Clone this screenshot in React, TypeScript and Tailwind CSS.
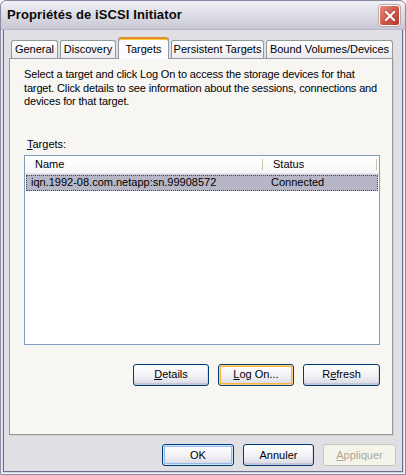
import React from "react";

const font = "font-['Tahoma','Liberation_Sans','Arial',sans-serif]";

const XpButton = ({
  children,
  variant = "normal",
  className = "",
}: {
  children: React.ReactNode;
  variant?: "normal" | "hot" | "default" | "disabled";
  className?: string;
}) => {
  if (variant === "disabled") {
    return (
      <div
        className={`flex items-center justify-center h-[22px] rounded-[3px] border border-[#c9c7ba] bg-[#f5f4ea] text-[#aca899] ${className}`}
      >
        {children}
      </div>
    );
  }
  const inner =
    variant === "hot"
      ? "shadow-[inset_0_0_0_1px_#ffd68b,inset_0_0_0_2px_#f5b43a]"
      : variant === "default"
      ? "shadow-[inset_0_0_0_1px_#cee7ff,inset_0_0_0_2px_#98b8ea]"
      : "shadow-[inset_0_-2px_0_0_#c6c5d7,inset_-1px_0_0_0_#dcdbe6]";
  return (
    <div
      className={`flex items-center justify-center h-[22px] rounded-[3px] border border-[#003c74] bg-gradient-to-b from-white via-[#f3f3f7] to-[#d8d8e3] text-black ${inner} ${className}`}
    >
      {children}
    </div>
  );
};

const Tab = ({
  label,
  active = false,
  width,
}: {
  label: string;
  active?: boolean;
  width: string;
}) => {
  if (active) {
    return (
      <div
        className={`relative z-10 h-[22px] -mb-px ${width} border-x border-[#919b9c] bg-[#fcfcfe] rounded-t-[3px] flex items-center justify-center pt-[2px] shadow-[inset_0_2px_0_0_#e68b2c,inset_0_3px_0_0_#ffc73c]`}
      >
        {label}
      </div>
    );
  }
  return (
    <div
      className={`h-[18px] ${width} border border-b-0 border-[#919b9c] rounded-t-[3px] bg-gradient-to-b from-white to-[#ebebf0] flex items-center justify-center`}
    >
      {label}
    </div>
  );
};

export default function App() {
  return (
    <div className={`w-[406px] h-[475px] ${font} text-[11px] text-black`}>
      <div className="w-full h-full flex flex-col rounded-t-[6px] border border-[#8b8aa3] bg-[#e0dfe3] shadow-[inset_0_0_0_1px_#f4f4f8,inset_0_0_0_2px_#d7d6df,inset_0_0_0_3px_#6f6e8a]">
        {/* Title bar */}
        <div className="h-[29px] shrink-0 flex items-center justify-between pl-[6px] pr-[5px] rounded-t-[6px] bg-gradient-to-b from-[#f1f1f5] via-[#dcdce5] to-[#c9c9d6] border-b border-[#b9b8c9]">
          <span className="font-['Liberation_Sans','Arial',sans-serif] font-bold text-[13px] text-[#0a0a0a] tracking-[0.1px]">
            Propriétés de iSCSI Initiator
          </span>
          <div className="w-[21px] h-[21px] rounded-[3px] border border-white bg-gradient-to-br from-[#e38a7b] via-[#cf5a4a] to-[#b23a2c] shadow-[0_0_0_1px_#c3a6a6] flex items-center justify-center mt-[1px]">
            <svg width="12" height="12" viewBox="0 0 12 12">
              <path
                d="M2 2 L10 10 M10 2 L2 10"
                stroke="#7a1c14"
                strokeWidth="3.6"
                strokeLinecap="square"
                opacity="0.35"
              />
              <path
                d="M2 2 L10 10 M10 2 L2 10"
                stroke="white"
                strokeWidth="2.2"
                strokeLinecap="square"
              />
            </svg>
          </div>
        </div>

        {/* Body */}
        <div className="flex-1 flex flex-col pl-[8px] pr-[12px] pt-[6px]">
          {/* Tabs */}
          <div className="flex items-end gap-[2px] pl-[2px] h-[22px]">
            <Tab label="General" width="w-[47px]" />
            <Tab label="Discovery" width="w-[56px]" />
            <Tab label="Targets" width="w-[51px]" active />
            <Tab label="Persistent Targets" width="w-[93px]" />
            <Tab label="Bound Volumes/Devices" width="w-[127px]" />
          </div>

          {/* Panel */}
          <div className="h-[377px] border border-[#919b9c] bg-[#f7f6f3] shadow-[1px_1px_0_0_#d0cfca] pl-[14px] pr-[12px] pt-[9px] flex flex-col">
            <p className="leading-[13.5px] whitespace-nowrap tracking-[-0.15px]">
              Select a target and click Log On to access the storage devices for that
              <br />
              target. Click details to see information about the sessions, connections and
              <br />
              devices for that target.
            </p>

            <div className="mt-[29px] pl-[3px] leading-[13px]">
              <span className="underline">T</span>argets:
            </div>

            <div className="mt-[4px] w-[356px] h-[190px] border border-[#7f9db9] bg-white flex flex-col">
              {/* Header */}
              <div className="h-[18px] flex items-stretch border-b border-[#e2e2e8] bg-gradient-to-b from-white to-[#f6f6f8] shadow-[0_1px_0_0_#d3d3dd]">
                <div className="w-[238px] flex items-center pl-[10px] border-r border-[#c7c5b2] my-[3px]">
                  Name
                </div>
                <div className="w-[114px] flex items-center pl-[10px] border-r border-[#c7c5b2] my-[3px]">
                  Status
                </div>
              </div>
              {/* Row */}
              <div className="mt-[1px] mx-[1px] h-[16px] flex items-center bg-[#b6b6c6] border border-dotted border-[#4a4a55]">
                <div className="w-[239px] pl-[4px]">iqn.1992-08.com.netapp:sn.99908572</div>
                <div className="pl-[5px]">Connected</div>
              </div>
            </div>

            <div className="mt-[19px] w-[356px] flex justify-end gap-[9px]">
              <XpButton className="w-[76px]">
                <span>
                  <span className="underline">D</span>etails
                </span>
              </XpButton>
              <XpButton className="w-[76px]" variant="hot">
                <span>
                  <span className="underline">L</span>og On...
                </span>
              </XpButton>
              <XpButton className="w-[77px]">
                <span>
                  R<span className="underline">e</span>fresh
                </span>
              </XpButton>
            </div>
          </div>

          {/* Dialog buttons */}
          <div className="mt-[9px] flex justify-end gap-[9px] mr-[-3px]">
            <XpButton className="w-[72px]" variant="default">
              OK
            </XpButton>
            <XpButton className="w-[71px]">Annuler</XpButton>
            <XpButton className="w-[73px]" variant="disabled">
              <span>
                <span className="underline">A</span>ppliquer
              </span>
            </XpButton>
          </div>
        </div>
      </div>
    </div>
  );
}
